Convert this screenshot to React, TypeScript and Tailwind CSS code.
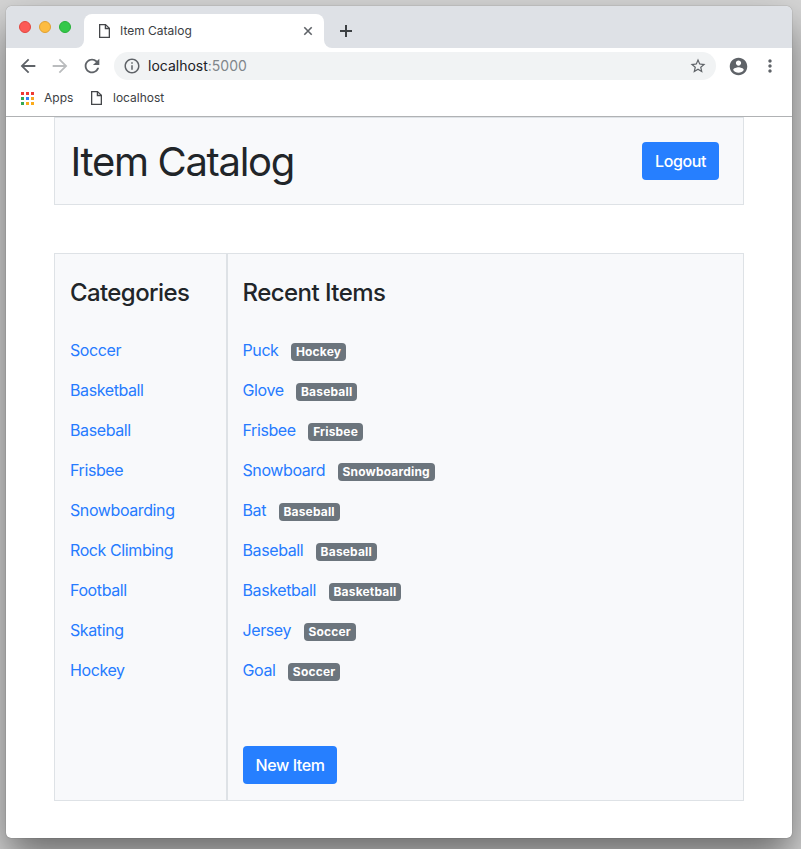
import React from "react";
import {
  MdArrowBack,
  MdArrowForward,
  MdInfoOutline,
  MdMoreVert,
  MdRefresh,
  MdStarBorder,
} from "react-icons/md";

const categories = [
  "Soccer",
  "Basketball",
  "Baseball",
  "Frisbee",
  "Snowboarding",
  "Rock Climbing",
  "Football",
  "Skating",
  "Hockey",
];

const items = [
  { name: "Puck", category: "Hockey" },
  { name: "Glove", category: "Baseball" },
  { name: "Frisbee", category: "Frisbee" },
  { name: "Snowboard", category: "Snowboarding" },
  { name: "Bat", category: "Baseball" },
  { name: "Baseball", category: "Baseball" },
  { name: "Basketball", category: "Basketball" },
  { name: "Jersey", category: "Soccer" },
  { name: "Goal", category: "Soccer" },
];

function FileIcon() {
  return (
    <svg width="12" height="14" viewBox="0 0 12 14" fill="none" stroke="#45474a" strokeWidth="1.3">
      <path d="M.65.65H6.5l3.85 3.6v9.1H.65z" />
      <path d="M6.4.8v3.7h3.9" />
    </svg>
  );
}

function AccountIcon() {
  return (
    <svg className="ml-[11.5px]" width="21" height="21" viewBox="0 0 24 24" fill="currentColor">
      <path d="M12 2C6.48 2 2 6.48 2 12s4.48 10 10 10 10-4.48 10-10S17.52 2 12 2zm0 3c1.66 0 3 1.34 3 3s-1.34 3-3 3-3-1.34-3-3 1.34-3 3-3zm0 14.2c-2.5 0-4.71-1.28-6-3.22.03-1.99 4-3.08 6-3.08 1.99 0 5.97 1.09 6 3.08-1.29 1.94-3.5 3.22-6 3.22z" />
    </svg>
  );
}

function AppsIcon() {
  return (
    <div className="grid grid-cols-3 gap-[2px]">
      <i className="size-[3px] bg-[#ee3b34]" />
      <i className="size-[3px] bg-[#ee3b34]" />
      <i className="size-[3px] bg-[#ee3b34]" />
      <i className="size-[3px] bg-[#34a853]" />
      <i className="size-[3px] bg-[#2f80f5]" />
      <i className="size-[3px] bg-[#f5a623]" />
      <i className="size-[3px] bg-[#34a853]" />
      <i className="size-[3px] bg-[#fbab1b]" />
      <i className="size-[3px] bg-[#fbab1b]" />
    </div>
  );
}

function TabStrip() {
  return (
    <div className="flex h-[42px] items-end bg-[#dee1e6]">
      <div className="flex h-[42px] w-[70px] gap-2 pl-[13px] pt-[15px]">
        <i className="size-3 rounded-full border border-[#e2463f] bg-[#fc5b57]" />
        <i className="size-3 rounded-full border border-[#e0a032] bg-[#fdbc40]" />
        <i className="size-3 rounded-full border border-[#27b038] bg-[#34c84a]" />
      </div>
      <div className="h-2 w-2 bg-white">
        <div className="size-2 rounded-br-lg bg-[#dee1e6]" />
      </div>
      <div className="flex h-[34px] w-[240px] items-center rounded-t-lg bg-white pl-[15px] pr-[11px]">
        <FileIcon />
        <span className="ml-[9px] flex-1 text-[12px] text-[#3c4043]">Item Catalog</span>
        <svg width="10" height="10" viewBox="0 0 10 10" stroke="#5f6368" strokeWidth="1.6">
          <path d="M1.3 1.3l7.4 7.4M8.7 1.3L1.3 8.7" />
        </svg>
      </div>
      <div className="h-2 w-2 bg-white">
        <div className="size-2 rounded-bl-lg bg-[#dee1e6]" />
      </div>
      <svg className="mb-[11px] ml-2" width="12" height="12" viewBox="0 0 12 12" stroke="#3c4043" strokeWidth="2">
        <path d="M6 0v12M0 6h12" />
      </svg>
    </div>
  );
}

function Toolbar() {
  return (
    <div className="flex h-9 items-center text-[#5f6368]">
      <MdArrowBack className="ml-[11px]" size={22} />
      <MdArrowForward className="ml-[10px] text-[#babcbe]" size={22} />
      <MdRefresh className="ml-[10px]" size={22} />
      <div className="ml-[11px] flex h-7 w-[602px] items-center rounded-full bg-[#f1f3f4] pl-[9px] pr-[9px]">
        <MdInfoOutline size={18} />
        <span className="ml-[7px] flex-1 pb-px text-[14px] text-[#202124]">
          localhost<span className="text-[#80868b]">:5000</span>
        </span>
        <MdStarBorder size={18} />
      </div>
      <AccountIcon />
      <MdMoreVert className="ml-[11.5px]" size={20} />
    </div>
  );
}

function Bookmarks() {
  return (
    <div className="flex h-[33px] items-center border-b border-[#b0b2b4] pb-1 pl-[15px] text-[12px] text-[#3c4043]">
      <AppsIcon />
      <span className="ml-[10px] w-[47px]">Apps</span>
      <FileIcon />
      <span className="ml-[10px]">localhost</span>
    </div>
  );
}

export default function App() {
  return (
    <div className="h-[849px] w-[801px] overflow-hidden bg-[#d6d6d6] pl-[6px] pt-[6px] font-['Inter',sans-serif]">
      <div className="h-[832px] w-[786px] overflow-hidden rounded-t-[6px] rounded-b-[5px] bg-white shadow-[0_0_1px_rgba(0,0,0,0.6),0_20px_40px_rgba(0,0,0,0.5)]">
        <TabStrip />
        <Toolbar />
        <Bookmarks />
        <main className="mx-12 w-[690px] text-[16px] leading-6 text-[#212529]">
          <header className="flex h-[88px] items-center justify-between border border-[#dee2e6] bg-[#f8f9fb] pl-[15.5px] pr-6">
            <h1 className="pt-[2px] text-[40px] leading-[48px] tracking-[-1.32px]">Item Catalog</h1>
            <button className="h-[38px] w-[77px] rounded bg-[#267fff] font-[450] tracking-[-0.4px] text-white">
              Logout
            </button>
          </header>
          <div className="mt-12 flex h-[548px]">
            <aside className="w-[173px] border border-[#dee2e6] bg-[#f8f9fb] pl-[15px] pt-6">
              <h4 className="text-[24px] font-medium leading-[29px] tracking-[-0.6px]">Categories</h4>
              <ul className="mt-[31px] flex flex-col gap-4 tracking-[-0.4px] text-[#267bff]">
                {categories.map((name) => (
                  <li key={name}>
                    <a>{name}</a>
                  </li>
                ))}
              </ul>
            </aside>
            <section className="flex-1 border border-[#dee2e6] bg-[#f8f9fb] pl-[14.5px] pt-6">
              <h4 className="text-[24px] font-medium leading-[29px] tracking-[-0.55px]">Recent Items</h4>
              <ul className="mt-[31px] flex flex-col gap-4 text-[#267bff]">
                {items.map((item) => (
                  <li key={item.name} className="flex h-6 items-center">
                    <a className="tracking-[-0.4px]">{item.name}</a>
                    <span className="ml-[12.6px] mt-[3px] h-[18px] rounded bg-[#6c757d] px-[4.8px] text-[12px] font-bold leading-[18px] tracking-[0.18px] text-white">
                      {item.category}
                    </span>
                  </li>
                ))}
              </ul>
              <button className="ml-[0.5px] mt-16 h-[38px] w-[94px] rounded bg-[#267fff] font-[450] tracking-[-0.4px] text-white">
                New Item
              </button>
            </section>
          </div>
        </main>
      </div>
    </div>
  );
}
